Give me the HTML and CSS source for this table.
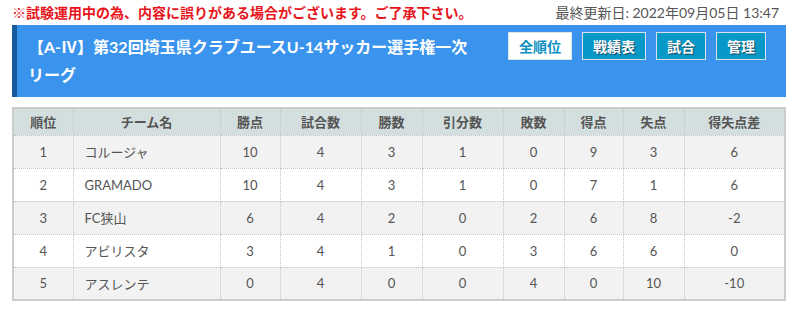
FILE: index.html
```html
<!DOCTYPE html>
<html lang="ja">
<head>
<meta charset="utf-8">
<link rel="stylesheet" href="styles.css">
</head>
<body>
<div class="page">
  <div class="topbar">
    <span class="notice">※試験運用中の為、内容に誤りがある場合がございます。ご了承下さい。</span>
    <span class="updated">最終更新日: 2022年09月05日 13:47</span>
  </div>
  <div class="header">
    <h1 class="title">【A-Ⅳ】第32回埼玉県クラブユースU-14サッカー選手権一次リーグ</h1>
    <div class="nav">
      <a class="btn btn-active">全順位</a>
      <a class="btn">戦績表</a>
      <a class="btn">試合</a>
      <a class="btn">管理</a>
    </div>
  </div>
  <table class="standings">
    <colgroup>
      <col class="c60"><col class="c147"><col class="c60"><col class="c81"><col class="c61"><col class="c81"><col class="c61"><col class="c59"><col class="c61"><col>
    </colgroup>
    <thead>
      <tr><th>順位</th><th>チーム名</th><th>勝点</th><th>試合数</th><th>勝数</th><th>引分数</th><th>敗数</th><th>得点</th><th>失点</th><th>得失点差</th></tr>
    </thead>
    <tbody>
      <tr><td>1</td><td class="team">コルージャ</td><td>10</td><td>4</td><td>3</td><td>1</td><td>0</td><td>9</td><td>3</td><td>6</td></tr>
      <tr><td>2</td><td class="team">GRAMADO</td><td>10</td><td>4</td><td>3</td><td>1</td><td>0</td><td>7</td><td>1</td><td>6</td></tr>
      <tr><td>3</td><td class="team">FC狭山</td><td>6</td><td>4</td><td>2</td><td>0</td><td>2</td><td>6</td><td>8</td><td>-2</td></tr>
      <tr><td>4</td><td class="team">アビリスタ</td><td>3</td><td>4</td><td>1</td><td>0</td><td>3</td><td>6</td><td>6</td><td>0</td></tr>
      <tr><td>5</td><td class="team">アスレンテ</td><td>0</td><td>4</td><td>0</td><td>0</td><td>4</td><td>0</td><td>10</td><td>-10</td></tr>
    </tbody>
  </table>
</div>
</body>
</html>
```
FILE: styles.css
```css
* { box-sizing: border-box; }
body {
  margin: 0;
  background: #fff;
  font-family: Lato, "Noto Sans CJK JP", sans-serif;
  color: #555;
}
.page {
  padding: 0 12px;
}
.topbar {
  display: flex;
  justify-content: space-between;
  align-items: center;
  height: 24px;
  font-size: 14px;
  padding-right: 7px;
}
.notice {
  color: #e8141b;
  font-weight: bold;
}
.updated {
  color: #555;
}
.header {
  display: flex;
  align-items: flex-start;
  gap: 38px;
  height: 72px;
  margin-top: 1px;
  background: #3a93ec;
  border-left: 5px solid #16599d;
  padding: 7px 20px 8px 11px;
}
.title {
  flex: 1;
  margin: 0;
  font-size: 16px;
  line-height: 28px;
  font-weight: bold;
  color: #fff;
  padding-top: 1px;
}
.nav {
  display: flex;
  gap: 10px;
  flex-shrink: 0;
}
.btn {
  display: flex;
  align-items: center;
  justify-content: center;
  height: 28px;
  padding: 0 10px;
  white-space: nowrap;
  background: #0899c8;
  border: 1px solid #d8e4ec;
  color: #fff;
  font-size: 14px;
  font-weight: bold;
  text-shadow: 1px 1px 1px #1c4660;
}
.btn-active {
  background: #fff;
  color: #0a8fc2;
  text-shadow: none;
}
.standings {
  width: 774px;
  margin-top: 10px;
  border-collapse: collapse;
  table-layout: fixed;
  border: 2px solid #ccc;
  font-size: 13px;
}
.c60 { width: 60px; }
.c147 { width: 147px; }
.c81 { width: 81px; }
.c61 { width: 61px; }
.c59 { width: 59px; }
.standings th,
.standings td {
  border: 1px dotted #c4c4c4;
  text-align: center;
  padding: 0;
}
.standings th {
  height: 27px;
  background: #d3dfdf;
  font-weight: bold;
  color: #555;
}
.standings td {
  height: 33px;
}
.standings tbody tr:nth-child(odd) td { background: #f2f2f2; }
.standings tbody tr:nth-child(even) td { background: #fff; }
.standings td.team {
  text-align: left;
  padding-left: 11px;
}
```
